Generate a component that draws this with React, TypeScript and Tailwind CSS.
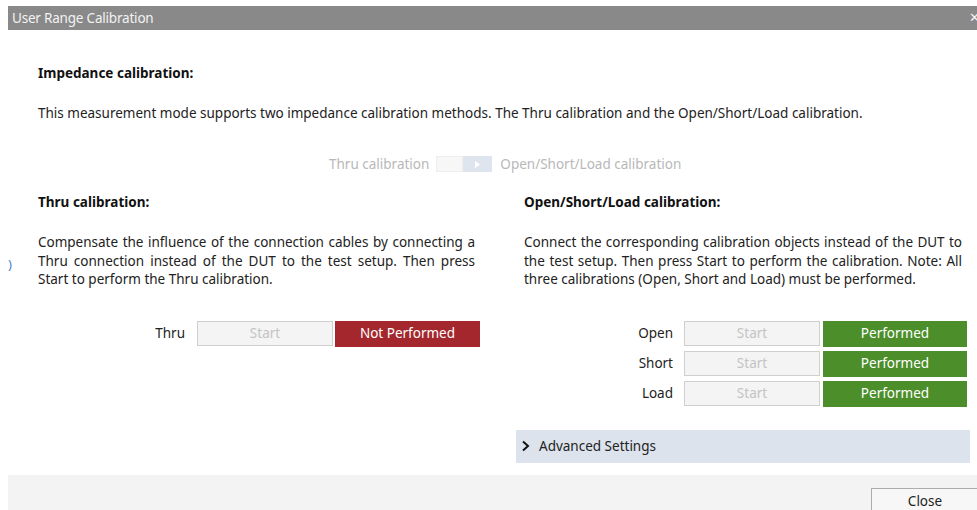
import React from "react";

const FONT = { fontFamily: '"Noto Sans", "Open Sans", Arial, sans-serif' };

function StartButton() {
  return (
    <div className="shrink-0 w-[136px] h-[25px] border border-[#cfcfcf] bg-[#f4f4f4] flex items-center justify-center text-[13.5px] text-[#c4c4c4]">
      Start
    </div>
  );
}

function StatusBox({ ok, label, width }: { ok: boolean; label: string; width: string }) {
  return (
    <div
      className={`shrink-0 ${width} h-[26px] flex items-center justify-center text-[13.5px] text-white ${
        ok ? "bg-[#4b8e2a]" : "bg-[#a3272c]"
      }`}
    >
      {label}
    </div>
  );
}

function CalRow({ label, ok, status }: { label: string; ok: boolean; status: string }) {
  return (
    <div className="flex items-center h-[30px]">
      <div className="shrink-0 w-[160px] text-right pr-[11px] text-[13.5px] text-[#222]">{label}</div>
      <StartButton />
      <div className="shrink-0 w-[3px]" />
      <StatusBox ok={ok} label={status} width="w-[144px]" />
    </div>
  );
}

export default function App() {
  return (
    <div className="w-[977px] h-[510px] bg-white overflow-hidden relative" style={FONT}>
      <div className="absolute left-[8px] top-[255px] text-[13px] text-[#4a7fd0]">)</div>
      <div className="ml-[8px] pt-[6px] w-[985px] flex flex-col">
        {/* title bar */}
        <div className="h-[24px] bg-[#898989] flex items-center justify-between pl-[4px] pr-[13px]">
          <span className="text-[13.5px] text-[#f2f2f2] tracking-[-0.2px]">User Range Calibration</span>
          <span className="text-[13px] text-[#f2f2f2]">✕</span>
        </div>

        {/* body */}
        <div className="h-[445px] bg-white pl-[30px] flex flex-col">
          <div className="mt-[34px] h-[18px] leading-[18px] text-[13.5px] font-bold text-[#111]">
            Impedance calibration:
          </div>
          <div className="mt-[22px] h-[18px] leading-[18px] text-[13.5px] text-[#222]">
            This measurement mode supports two impedance calibration methods. The Thru calibration and the
            Open/Short/Load calibration.
          </div>

          {/* mode toggle */}
          <div className="mt-[33px] h-[18px] flex items-center text-[13.5px] text-[#b8b8b8]">
            <div className="w-[291px]" />
            <span>Thru calibration</span>
            <div className="ml-[7px] flex h-[16px]">
              <div className="w-[27px] bg-[#f7f7f8] border border-[#eeeeee]" />
              <div className="w-[29px] bg-[#dfe5ee] flex items-center justify-center">
                <svg width="5" height="7" viewBox="0 0 5 7">
                  <path d="M0 0 L5 3.5 L0 7 Z" fill="#ffffff" />
                </svg>
              </div>
            </div>
            <span className="ml-[8px]">Open/Short/Load calibration</span>
          </div>

          {/* two columns */}
          <div className="mt-[20px] flex">
            <div className="shrink-0 w-[437px] flex flex-col">
              <div className="h-[18px] leading-[18px] text-[13.5px] font-bold text-[#111]">Thru calibration:</div>
              <p className="mt-[22px] text-[13.5px] leading-[18.5px] text-[#222] text-justify">
                Compensate the influence of the connection cables by connecting a Thru connection instead of the DUT
                to the test setup. Then press Start to perform the Thru calibration.
              </p>
              <div className="mt-[30px] flex items-center h-[30px]">
                <div className="shrink-0 w-[159px] text-right pr-[12px] text-[13.5px] text-[#222]">Thru</div>
                <StartButton />
                <div className="shrink-0 w-[2px]" />
                <StatusBox ok={false} label="Not Performed" width="w-[145px]" />
              </div>
            </div>

            <div className="shrink-0 ml-[49px] w-[443px] flex flex-col">
              <div className="h-[18px] leading-[18px] text-[13.5px] font-bold text-[#111]">
                Open/Short/Load calibration:
              </div>
              <p className="mt-[22px] w-[438px] text-[13.5px] leading-[18.5px] text-[#222] text-justify">
                Connect the corresponding calibration objects instead of the DUT to the test setup. Then press Start
                to perform the calibration. Note: All three calibrations (Open, Short and Load) must be performed.
              </p>
              <div className="mt-[30px] flex flex-col">
                <CalRow label="Open" ok status="Performed" />
                <CalRow label="Short" ok status="Performed" />
                <CalRow label="Load" ok status="Performed" />
              </div>
              <div className="mt-[21px] -ml-[8px] w-[454px] h-[33px] bg-[#dce3ec] flex items-center pl-[5px]">
                <svg width="10" height="12" viewBox="0 0 10 12">
                  <path d="M2 1.5 L7 6 L2 10.5" fill="none" stroke="#111" strokeWidth="2" />
                </svg>
                <span className="ml-[8px] text-[13.5px] text-[#222]">Advanced Settings</span>
              </div>
            </div>
          </div>
        </div>

        {/* footer */}
        <div className="h-[35px] bg-[#f3f3f3] flex justify-end items-start pr-[14px] pt-[13px]">
          <div className="w-[108px] h-[26px] bg-[#f7f7f7] border border-[#adadad] flex items-center justify-center text-[13.5px] text-[#222]">
            Close
          </div>
        </div>
      </div>
    </div>
  );
}
